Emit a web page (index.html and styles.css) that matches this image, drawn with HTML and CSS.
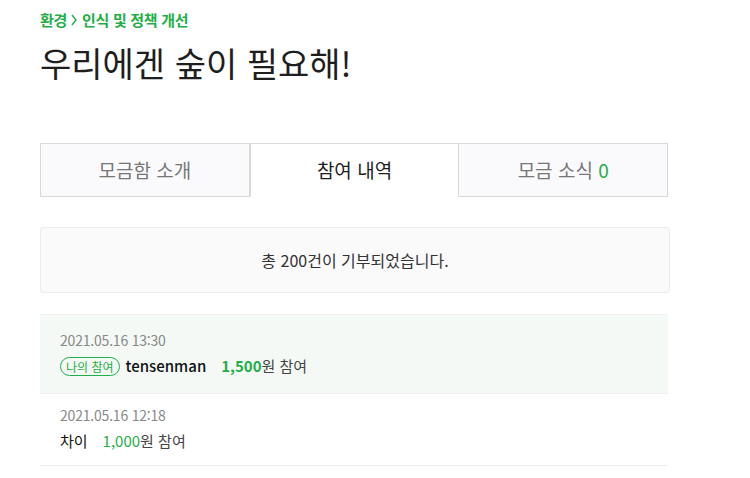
FILE: index.html
```html
<!DOCTYPE html>
<html lang="ko">
<head>
  <meta charset="UTF-8" />
  <title>우리에겐 숲이 필요해!</title>
  <link rel="stylesheet" href="styles.css">
</head>
<body>
  <div class="page">
    <div class="breadcrumb">
      <span>환경</span>
      <svg class="arrow" width="6" height="12" viewBox="0 0 6 12"><path d="M1 1 L5 6 L1 11" fill="none" stroke="currentColor" stroke-width="1.4"/></svg>
      <span>인식 및 정책 개선</span>
    </div>
    <h1>우리에겐 숲이 필요해!</h1>

    <ul class="tabs">
      <li class="tab">모금함 소개</li>
      <li class="tab active">참여 내역</li>
      <li class="tab">모금 소식 <span class="count">0</span></li>
    </ul>

    <div class="summary">총 200건이 기부되었습니다.</div>

    <ul class="history">
      <li class="row mine">
        <div class="date">2021.05.16 13:30</div>
        <div class="info">
          <span class="badge">나의 참여</span>
          <span class="name">tensenman</span>
          <span class="amount"><em>1,500</em>원 참여</span>
        </div>
      </li>
      <li class="row">
        <div class="date">2021.05.16 12:18</div>
        <div class="info">
          <span class="name">차이</span>
          <span class="amount"><em>1,000</em>원 참여</span>
        </div>
      </li>
    </ul>
  </div>
</body>
</html>
```

FILE: styles.css
```css
body {
  margin: 0;
  font-family: "Noto Sans CJK KR", "Noto Sans", sans-serif;
  color: #222;
  background: #fff;
}

.page {
  width: 630px;
  padding: 8px 0 0 40px;
}

.breadcrumb {
  display: flex;
  align-items: center;
  gap: 4px;
  font-size: 15px;
  font-weight: 700;
  color: #1fae47;
  line-height: 24px;
  letter-spacing: -0.3px;
}

.breadcrumb .arrow {
  margin-right: 1px;
}

h1 {
  margin: 8px 0 0;
  font-size: 34px;
  font-weight: 400;
  line-height: 46px;
  color: #1e1e1e;
}

.tabs {
  list-style: none;
  margin: 57px 0 0;
  padding: 0;
  display: flex;
  width: 628px;
}

.tab {
  flex: 1;
  height: 52px;
  line-height: 52px;
  text-align: center;
  font-size: 19px;
  color: #777;
  background: #fafafc;
  border: 1px solid #d8d8d8;
  border-left: none;
}

.tab:first-child {
  border-left: 1px solid #d8d8d8;
}

.tab.active {
  background: #fff;
  color: #1e1e1e;
  border-bottom-color: #fff;
  border-left: 1px solid #d8d8d8;
}

.tab .count {
  color: #1fae47;
}

.summary {
  margin-top: 30px;
  height: 64px;
  line-height: 64px;
  text-align: center;
  font-size: 16px;
  color: #333;
  background: #fafafa;
  border: 1px solid #ececec;
  border-radius: 3px;
}

.history {
  list-style: none;
  margin: 21px 0 0;
  padding: 0;
  width: 628px;
}

.row {
  padding: 10px 20px 13px;
  border-top: 1px solid #eee;
}

.row:last-child {
  border-bottom: 1px solid #eee;
}

.row.mine {
  background: #f4f9f5;
  padding: 14px 20px 16px;
}

.date {
  font-size: 14px;
  color: #888;
  line-height: 22px;
  letter-spacing: -0.2px;
}

.info {
  margin-top: 4px;
  display: flex;
  align-items: center;
  font-size: 15px;
  line-height: 22px;
}

.badge {
  font-size: 12px;
  color: #1fae47;
  border: 1px solid #1fae47;
  border-radius: 10px;
  padding: 0 5px;
  line-height: 17px;
  margin-right: 6px;
}

.name {
  color: #111;
  margin-right: 15px;
}

.mine .name {
  font-weight: 500;
}

.amount {
  color: #444;
}

.amount em {
  font-style: normal;
  color: #1fae47;
}

.mine .amount em {
  font-weight: 700;
}
```
